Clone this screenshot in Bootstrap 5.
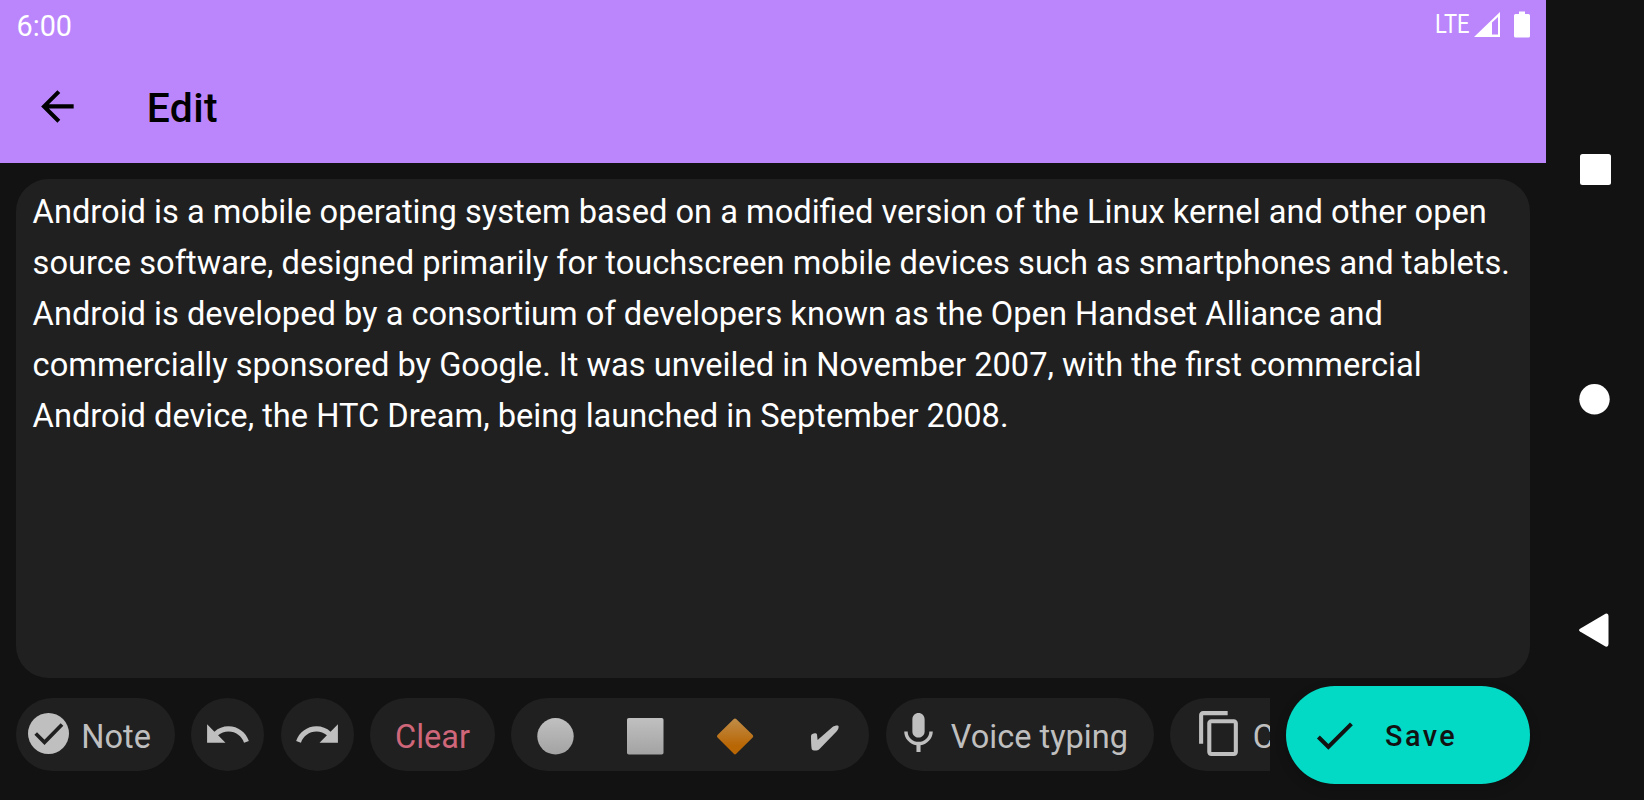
<!DOCTYPE html>
<html lang="en">
<head>
  <meta charset="UTF-8" />
  <meta name="viewport" content="width=device-width, initial-scale=1.0" />
  <title>Edit</title>
  <link href="https://cdn.jsdelivr.net/npm/bootstrap@5.3.3/dist/css/bootstrap.min.css" rel="stylesheet" />
  <style>
    body {
      background: #121212;
      font-family: Roboto, sans-serif;
      color: #fff;
    }
    svg { display: block; flex: none; }
    .app { width: 1546.4px; }
    .top-bar { height: 163px; background: #bb86fc; }
    .status-bar { height: 49px; padding: 0 14.6px 0 16.5px; }
    .clock { font-size: 28.8px; line-height: 49px; padding-top: 2px; }
    .status-icons { gap: 2px; }
    .title-bar { height: 114px; padding: 0 0 0 32.6px; }
    .title-bar h1 { font-size: 40.8px; font-weight: 500; line-height: 48px; letter-spacing: .4px; margin: 4px 0 0 65.4px; }
    .editor {
      height: 499px;
      margin: 16px 16.3px 0;
      padding: 8px 16.3px;
      border: 0;
      border-radius: 32.5px;
      background: #202020;
      color: #fff;
      font-size: 32.64px;
      line-height: 51px;
      resize: none;
      outline: 0;
      overflow: hidden;
    }
    .bottom-bar { height: 98px; margin: 8px 16.3px 0; gap: 16px; }
    .tools { gap: 16.4px; margin-bottom: 2px; }
    .chip {
      height: 73px;
      padding: 0;
      border: 0;
      border-radius: 36.5px;
      background: #202020;
      color: #bfbfbf;
      font-size: 32.5px;
      line-height: 73px;
      flex: none;
      white-space: nowrap;
    }
    .chip span { padding-top: 6px; }
    .chip-round { width: 73px; }
    .chip-note { width: 158.6px; padding-left: 12px; gap: 11px; }
    .chip-clear { width: 125px; color: #cf6679; }
    .chip-shapes { width: 358px; }
    .chip-voice { width: 268px; padding-left: 8px; gap: 8px; }
    .chip-copy { width: 170px; padding-left: 24.5px; gap: 9px; }
    .chip-voice svg, .chip-copy svg { margin-bottom: 1px; }
    .save {
      width: 244.6px;
      height: 98px;
      padding: 0 0 0 24.5px;
      border: 0;
      border-radius: 49px;
      background: #03dac5;
      color: #121212;
      font-size: 28.8px;
      font-weight: 500;
      letter-spacing: 2.5px;
      gap: 26px;
      box-shadow: 0 4px 12px rgba(0, 0, 0, .2);
    }
    .save span { padding-top: 4px; }
    .system-nav { width: 97.6px; padding: 154px 0 152.5px; }
  </style>
</head>
<body class="vh-100 overflow-hidden d-flex">
  <main class="app d-flex flex-column flex-shrink-0">
    <header class="top-bar">
      <div class="status-bar d-flex justify-content-between">
        <span class="clock">6:00</span>
        <div class="status-icons d-flex">
          <svg width="38" height="49" fill="#fff"><text x="1" y="33" font-size="25" textLength="34.500" lengthAdjust="spacingAndGlyphs">LTE</text></svg>
          <svg width="26" height="49" fill="#fff" fill-rule="evenodd"><path d="M0 37L26 12v25zM18 22.500V34.500h6V17z" /></svg>
          <svg class="ms-2 ps-1" width="22" height="49" fill="#fff"><path d="M5 11.500h6V14h3.500q1.500 0 1.500 1.500v20.500q0 1.500-1.500 1.500h-13Q0 37.500 0 36V15.500Q0 14 1.500 14H5z" /></svg>
        </div>
      </div>
      <div class="title-bar d-flex align-items-center">
        <svg width="48.800" height="48.800" viewBox="0 0 24 24" fill="#000"><path d="M20 11H7.830l5.590-5.590L12 4l-8 8 8 8 1.410-1.410L7.830 13H20z" /></svg>
        <h1 class="text-black">Edit</h1>
      </div>
    </header>

    <textarea class="editor" spellcheck="false">Android is a mobile operating system based on a modified version of the Linux kernel and other open source software, designed primarily for touchscreen mobile devices such as smartphones and tablets. Android is developed by a consortium of developers known as the Open Handset Alliance and commercially sponsored by Google. It was unveiled in November 2007, with the first commercial Android device, the HTC Dream, being launched in September 2008.</textarea>

    <footer class="bottom-bar d-flex align-items-center">
      <div class="tools d-flex flex-grow-1 overflow-hidden">
        <button class="chip chip-note d-flex align-items-center">
          <svg width="42" height="42"><circle cx="20.500" cy="20.500" r="20.500" fill="#bfbfbf" /><path d="M7.700 20.500L16.500 29.300 34 11.500" fill="none" stroke="#202020" stroke-width="3.700" /></svg>
          <span>Note</span>
        </button>
        <button class="chip chip-round d-flex align-items-center justify-content-center">
          <svg width="49" height="49" viewBox="0 0 24 24" fill="#bfbfbf"><path d="M12.500 8c-2.650 0-5.050.990-6.900 2.600L2 7v9h9l-3.620-3.620c1.390-1.160 3.160-1.880 5.120-1.880 3.540 0 6.550 2.310 7.600 5.500l2.370-.780C21.080 11.030 17.150 8 12.500 8z" /></svg>
        </button>
        <button class="chip chip-round d-flex align-items-center justify-content-center">
          <svg width="49" height="49" viewBox="0 0 24 24" fill="#bfbfbf"><path d="M18.400 10.600C16.550 8.990 14.150 8 11.500 8c-4.650 0-8.580 3.030-9.960 7.220L3.900 16c1.050-3.190 4.050-5.500 7.600-5.500 1.950 0 3.730.720 5.120 1.880L13 16h9V7z" /></svg>
        </button>
        <button class="chip chip-clear d-flex align-items-center justify-content-center"><span>Clear</span></button>
        <div class="chip chip-shapes">
          <svg width="358" height="73">
            <defs>
              <linearGradient id="grey" x2="0" y2="1"><stop stop-color="#c0c0c0" /><stop offset="1" stop-color="#a3a3a3" /></linearGradient>
              <linearGradient id="amber" x2="0" y2="1"><stop stop-color="#c08d49" /><stop offset=".75" stop-color="#b96705" /></linearGradient>
            </defs>
            <circle cx="44.500" cy="38.300" r="18.200" fill="url(#grey)" />
            <rect x="116" y="20" width="36.500" height="36.500" rx="1.800" fill="url(#grey)" />
            <path d="M222.800 21q1.200-1.200 2.400 0L241.700 37.100q1.200 1.200 0 2.400L225.200 55.800q-1.200 1.200-2.400 0L206.500 39.500q-1.200-1.200 0-2.400z" fill="url(#amber)" />
            <path d="M300 38c0-2.500 5.500-3.700 6-1.500l.6 5.500L321.500 29c2.500-1.500 6-2 6.100-.5.200 1.500-.6 3.500-2.100 5L308.500 51c-1.800 2-7 2-7.800 0-.5-3-.7-8-.7-13z" fill="#bfbfbf" />
          </svg>
        </div>
        <button class="chip chip-voice d-flex align-items-center">
          <svg width="49" height="49" viewBox="0 0 24 24" fill="#bfbfbf"><path d="M12 14c1.660 0 3-1.340 3-3V5c0-1.660-1.340-3-3-3S9 3.340 9 5v6c0 1.660 1.340 3 3 3zm5.300-3c0 3-2.540 5.100-5.300 5.100S6.700 14 6.700 11H5c0 3.410 2.720 6.230 6 6.720V21h2v-3.280c3.280-.480 6-3.300 6-6.720z" /></svg>
          <span>Voice typing</span>
        </button>
        <button class="chip chip-copy d-flex align-items-center">
          <svg width="49" height="49" viewBox="0 0 24 24" fill="#bfbfbf"><path d="M16 1H4c-1.100 0-2 .900-2 2v14h2V3h12zm3 4H8c-1.100 0-2 .900-2 2v14c0 1.100.900 2 2 2h11c1.100 0 2-.900 2-2V7c0-1.100-.900-2-2-2zm0 16H8V7h11z" /></svg>
          <span>C</span>
        </button>
      </div>
      <button class="save d-flex align-items-center flex-shrink-0">
        <svg width="49" height="49" viewBox="0 0 24 24" fill="#121212"><path d="M9 16.170L4.830 12l-1.420 1.410L9 19 21 7l-1.410-1.410z" /></svg>
        <span>Save</span>
      </button>
    </footer>
  </main>

  <nav class="system-nav d-flex flex-column align-items-center justify-content-between flex-shrink-0">
    <svg width="31" height="31" fill="#fff"><rect width="31" height="31" rx="2.500" /></svg>
    <svg width="33" height="31" fill="#fff" overflow="visible"><circle cx="15.500" cy="16.300" r="15.200" /></svg>
    <svg width="33" height="35" fill="#fff"><path d="M1 15.700L26.500.700Q29.500-.300 29.500 3v28q0 3.300-3 2.500L1 18.500q-2-1.400 0-2.800z" /></svg>
  </nav>

  <script src="https://cdn.jsdelivr.net/npm/bootstrap@5.3.3/dist/js/bootstrap.bundle.min.js"></script>
</body>
</html>
